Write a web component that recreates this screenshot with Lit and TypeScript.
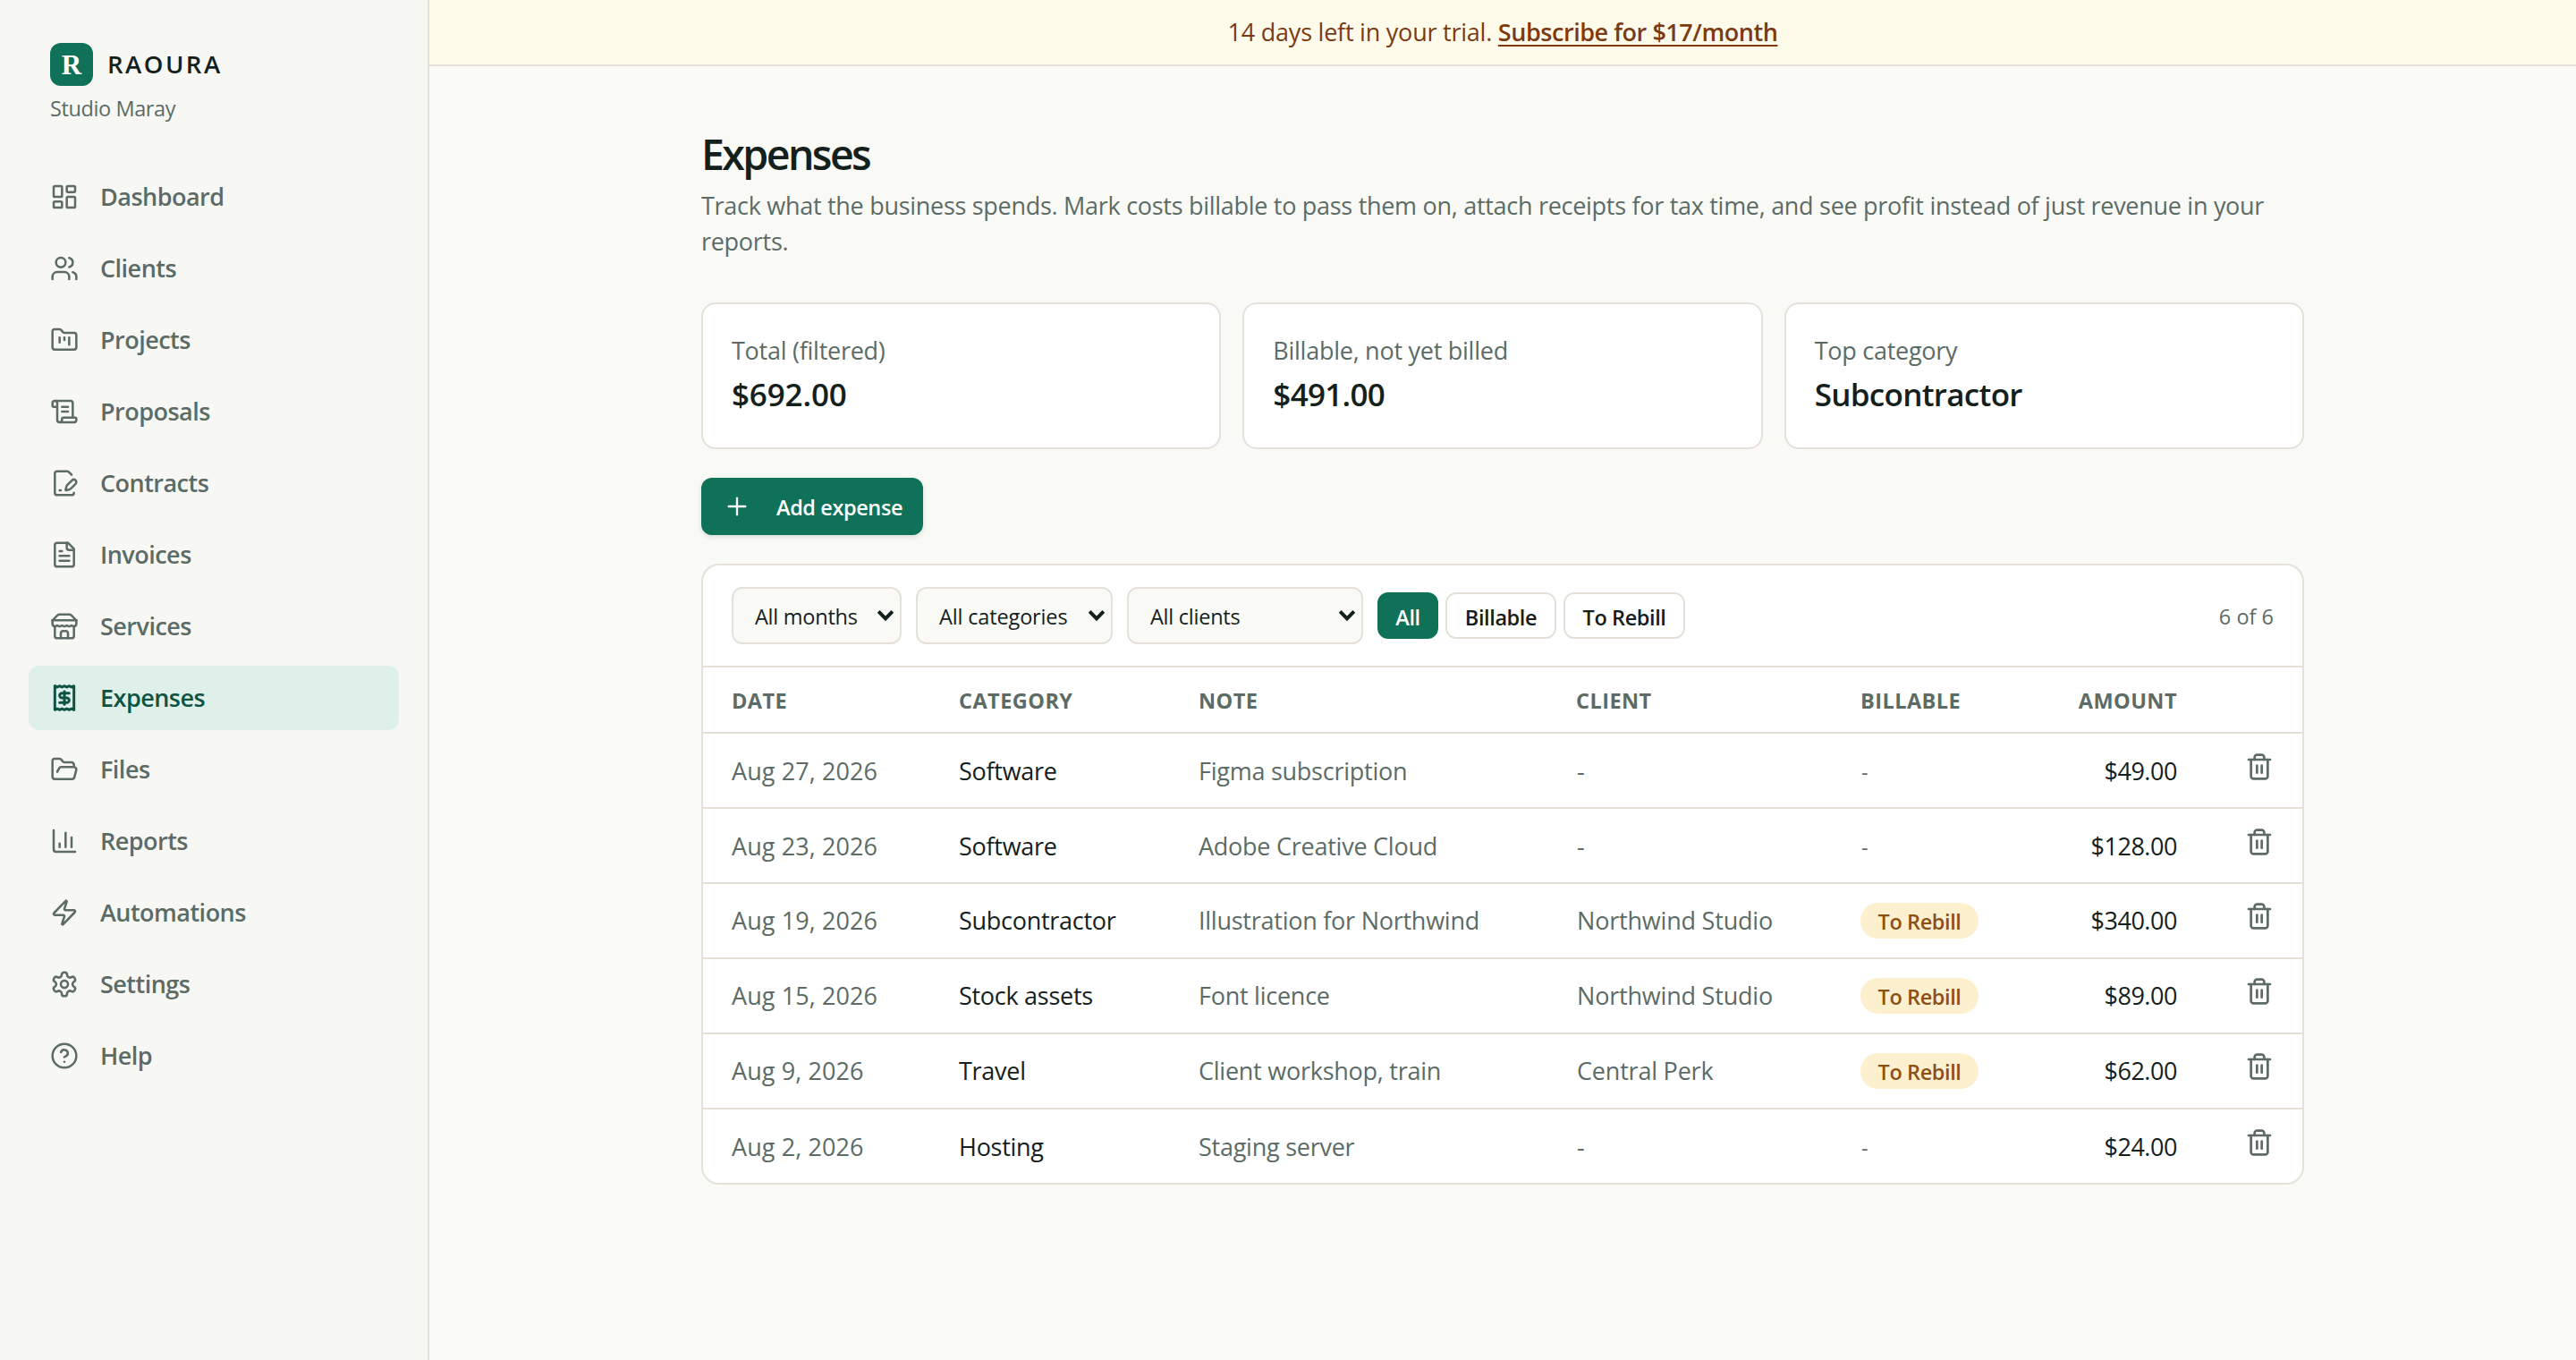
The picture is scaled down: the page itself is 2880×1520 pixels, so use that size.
import { LitElement, html, css, svg } from "lit";
import { customElement, property } from "lit/decorators.js";
import { classMap } from "lit/directives/class-map.js";

const ICONS: Record<string, unknown> = {
  dashboard: svg`<rect width="7" height="9" x="3" y="3" rx="1"/><rect width="7" height="5" x="14" y="3" rx="1"/><rect width="7" height="9" x="14" y="12" rx="1"/><rect width="7" height="5" x="3" y="16" rx="1"/>`,
  users: svg`<path d="M16 21v-2a4 4 0 0 0-4-4H6a4 4 0 0 0-4 4v2"/><circle cx="9" cy="7" r="4"/><path d="M22 21v-2a4 4 0 0 0-3-3.87"/><path d="M16 3.13a4 4 0 0 1 0 7.75"/>`,
  kanban: svg`<path d="M4 20h16a2 2 0 0 0 2-2V8a2 2 0 0 0-2-2h-7.93a2 2 0 0 1-1.66-.9l-.82-1.2A2 2 0 0 0 7.93 3H4a2 2 0 0 0-2 2v13c0 1.1.9 2 2 2Z"/><path d="M8 10v4"/><path d="M12 10v2"/><path d="M16 10v6"/>`,
  scroll: svg`<path d="M15 12h-5"/><path d="M15 8h-5"/><path d="M19 17V5a2 2 0 0 0-2-2H4"/><path d="M8 21h12a2 2 0 0 0 2-2v-1a1 1 0 0 0-1-1H11a1 1 0 0 0-1 1v1a2 2 0 1 1-4 0V5a2 2 0 1 0-4 0v2a1 1 0 0 0 1 1h3"/>`,
  filePen: svg`<path d="m18 5-2.414-2.414A2 2 0 0 0 14.172 2H6a2 2 0 0 0-2 2v16a2 2 0 0 0 2 2h12a2 2 0 0 0 2-2"/><path d="M21.378 12.626a1 1 0 0 0-3.004-3.004l-4.01 4.012a2 2 0 0 0-.506.854l-.837 2.87a.5.5 0 0 0 .62.62l2.87-.837a2 2 0 0 0 .854-.506z"/><path d="M8 18h1"/>`,
  fileText: svg`<path d="M15 2H6a2 2 0 0 0-2 2v16a2 2 0 0 0 2 2h12a2 2 0 0 0 2-2V7Z"/><path d="M14 2v4a2 2 0 0 0 2 2h4"/><path d="M10 9H8"/><path d="M16 13H8"/><path d="M16 17H8"/>`,
  store: svg`<path d="m2 7 4.41-4.41A2 2 0 0 1 7.83 2h8.34a2 2 0 0 1 1.42.59L22 7"/><path d="M4 12v8a2 2 0 0 0 2 2h12a2 2 0 0 0 2-2v-8"/><path d="M15 22v-4a2 2 0 0 0-2-2h-2a2 2 0 0 0-2 2v4"/><path d="M2 7h20"/><path d="M22 7v3a2 2 0 0 1-2 2a2.7 2.7 0 0 1-1.59-.63.7.7 0 0 0-.82 0A2.7 2.7 0 0 1 16 12a2.7 2.7 0 0 1-1.59-.63.7.7 0 0 0-.82 0A2.7 2.7 0 0 1 12 12a2.7 2.7 0 0 1-1.59-.63.7.7 0 0 0-.82 0A2.7 2.7 0 0 1 8 12a2.7 2.7 0 0 1-1.59-.63.7.7 0 0 0-.82 0A2.7 2.7 0 0 1 4 12a2 2 0 0 1-2-2V7"/>`,
  receipt: svg`<path d="M4 2v20l2-1 2 1 2-1 2 1 2-1 2 1 2-1 2 1V2l-2 1-2-1-2 1-2-1-2 1-2-1-2 1Z"/><path d="M16 8h-6a2 2 0 1 0 0 4h4a2 2 0 1 1 0 4H8"/><path d="M12 17.5v-11"/>`,
  folderOpen: svg`<path d="m6 14 1.5-2.9A2 2 0 0 1 9.24 10H20a2 2 0 0 1 1.94 2.5l-1.54 6a2 2 0 0 1-1.95 1.5H4a2 2 0 0 1-2-2V5a2 2 0 0 1 2-2h3.9a2 2 0 0 1 1.69.9l.81 1.2a2 2 0 0 0 1.67.9H18a2 2 0 0 1 2 2v2"/>`,
  chart: svg`<path d="M3 3v16a2 2 0 0 0 2 2h16"/><path d="M18 17V9"/><path d="M13 17V5"/><path d="M8 17v-3"/>`,
  zap: svg`<path d="M4 14a1 1 0 0 1-.78-1.63l9.9-10.2a.5.5 0 0 1 .86.46l-1.92 6.02A1 1 0 0 0 13 10h7a1 1 0 0 1 .78 1.63l-9.9 10.2a.5.5 0 0 1-.86-.46l1.92-6.02A1 1 0 0 0 11 14z"/>`,
  settings: svg`<path d="M12.22 2h-.44a2 2 0 0 0-2 2v.18a2 2 0 0 1-1 1.73l-.43.25a2 2 0 0 1-2 0l-.15-.08a2 2 0 0 0-2.73.73l-.22.38a2 2 0 0 0 .73 2.73l.15.1a2 2 0 0 1 1 1.72v.51a2 2 0 0 1-1 1.74l-.15.09a2 2 0 0 0-.73 2.73l.22.38a2 2 0 0 0 2.73.73l.15-.08a2 2 0 0 1 2 0l.43.25a2 2 0 0 1 1 1.73V20a2 2 0 0 0 2 2h.44a2 2 0 0 0 2-2v-.18a2 2 0 0 1 1-1.73l.43-.25a2 2 0 0 1 2 0l.15.08a2 2 0 0 0 2.73-.73l.22-.39a2 2 0 0 0-.73-2.73l-.15-.08a2 2 0 0 1-1-1.74v-.5a2 2 0 0 1 1-1.74l.15-.09a2 2 0 0 0 .73-2.73l-.22-.38a2 2 0 0 0-2.73-.73l-.15.08a2 2 0 0 1-2 0l-.43-.25a2 2 0 0 1-1-1.73V4a2 2 0 0 0-2-2z"/><circle cx="12" cy="12" r="3"/>`,
  help: svg`<circle cx="12" cy="12" r="10"/><path d="M9.09 9a3 3 0 0 1 5.83 1c0 2-3 3-3 3"/><path d="M12 17h.01"/>`,
  plus: svg`<path d="M5 12h14"/><path d="M12 5v14"/>`,
  trash: svg`<path d="M3 6h18"/><path d="M19 6v14c0 1-1 2-2 2H7c-1 0-2-1-2-2V6"/><path d="M8 6V4c0-1 1-2 2-2h4c1 0 2 1 2 2v2"/><path d="M10 11v6"/><path d="M14 11v6"/>`,
};

@customElement("ui-icon")
export class UiIcon extends LitElement {
  @property() name = "";
  @property({ type: Number }) weight = 1.75;
  static styles = css`
    :host { display: block; width: 32px; height: 32px; flex: none; }
    .glyph { display: block; width: 100%; height: 100%; }
  `;
  render() {
    return html`<svg class="glyph" viewBox="0 0 24 24" fill="none" stroke="currentColor"
      stroke-width=${this.weight} stroke-linecap="round" stroke-linejoin="round">${ICONS[this.name]}</svg>`;
  }
}

const NAV: [string, string][] = [
  ["Dashboard", "dashboard"], ["Clients", "users"], ["Projects", "kanban"], ["Proposals", "scroll"],
  ["Contracts", "filePen"], ["Invoices", "fileText"], ["Services", "store"], ["Expenses", "receipt"],
  ["Files", "folderOpen"], ["Reports", "chart"], ["Automations", "zap"], ["Settings", "settings"], ["Help", "help"],
];

@customElement("app-sidebar")
export class AppSidebar extends LitElement {
  static styles = css`
    :host { display: flex; flex-direction: column; box-sizing: border-box; width: 480px; flex: none;
      padding: 48px 32px 0; border-right: 2px solid #e5e1d8; background: #f7f8f4; }
    .brand { display: flex; align-items: center; gap: 16px; padding-left: 24px; height: 48px; }
    .mark { width: 48px; height: 48px; border-radius: 12px; background: #0f7158; color: #fff;
      font: 700 31px/50px "Liberation Serif", serif; text-align: center; }
    .name { font-size: 27.5px; font-weight: 600; letter-spacing: 2.5px; line-height: 48px; color: #14201c; }
    .studio { padding-left: 24px; margin-top: 5px; font-size: 23.5px; line-height: 40px; letter-spacing: -0.4px; color: #5c6b66; }
    .nav { display: flex; flex-direction: column; gap: 8px; margin-top: 43px; }
    .item { display: flex; align-items: center; gap: 24px; height: 72px; padding: 0 24px; border-radius: 12px;
      font-size: 27px; font-weight: 600; line-height: 72px; letter-spacing: -0.52px; color: #5c6b66; }
    .active { background: #dff0ea; color: #0f5443; }
  `;
  render() {
    return html`
      <div class="brand"><div class="mark">R</div><div class="name">RAOURA</div></div>
      <div class="studio">Studio Maray</div>
      <nav class="nav">${NAV.map(([label, icon]) => {
        const active = label === "Expenses";
        return html`<div class=${classMap({ item: true, active })}>
          <ui-icon name=${icon} .weight=${active ? 2.25 : 1.9}></ui-icon><span>${label}</span></div>`;
      })}</nav>`;
  }
}

interface Expense { date: string; category: string; note: string; client: string; rebill: boolean; amount: string; }

const EXPENSES: Expense[] = [
  { date: "Aug 27, 2026", category: "Software", note: "Figma subscription", client: "-", rebill: false, amount: "$49.00" },
  { date: "Aug 23, 2026", category: "Software", note: "Adobe Creative Cloud", client: "-", rebill: false, amount: "$128.00" },
  { date: "Aug 19, 2026", category: "Subcontractor", note: "Illustration for Northwind", client: "Northwind Studio", rebill: true, amount: "$340.00" },
  { date: "Aug 15, 2026", category: "Stock assets", note: "Font licence", client: "Northwind Studio", rebill: true, amount: "$89.00" },
  { date: "Aug 9, 2026", category: "Travel", note: "Client workshop, train", client: "Central Perk", rebill: true, amount: "$62.00" },
  { date: "Aug 2, 2026", category: "Hosting", note: "Staging server", client: "-", rebill: false, amount: "$24.00" },
];

@customElement("expense-table")
export class ExpenseTable extends LitElement {
  static styles = css`
    :host { display: block; box-sizing: border-box; height: 694px; border: 2px solid #e5e1d8; border-radius: 20px; background: #fff; overflow: hidden; }
    .filters { display: flex; align-items: center; height: 112px; padding: 0 32px; border-bottom: 2px solid #e5e1d8;
      font-size: 23.5px; color: #14201c; }
    .select { display: flex; align-items: center; justify-content: space-between; box-sizing: border-box; height: 64px;
      margin-right: 16px; padding: 2px 6px 0 24px; border: 2px solid #e5e1d8; border-radius: 12px; background: #f9faf6;
      letter-spacing: -0.25px; line-height: 40px; }
    .months { width: 190px; }
    .categories { width: 220px; letter-spacing: -0.15px; }
    .clients { width: 264px; }
    .chevron { width: 20px; height: 14px; margin-top: -2px; }
    .chips { display: flex; gap: 8px; }
    .chip { box-sizing: border-box; height: 52px; padding-top: 2px; border: 2px solid #e5e1d8; border-radius: 12px;
      font-weight: 600; line-height: 48px; text-align: center; letter-spacing: -0.4px; }
    .chip-all { width: 68px; border-color: #0f7158; background: #0f7158; color: #fff; }
    .chip-billable { width: 124px; }
    .chip-rebill { width: 136px; }
    .count { margin-left: auto; padding-top: 2px; line-height: 40px; color: #5c6b66; }
    .row { display: grid; grid-template-columns: 254px 268px 422px 318px 174px 180px 1fr; align-items: center; box-sizing: border-box;
      height: 84px; padding: 0 32px; border-bottom: 2px solid #e5e1d8; font-size: 27px; line-height: 82px; color: #5c6b66; }
    .row:last-child { border-bottom: none; height: 82px; }
    .head { height: 74px; padding-top: 2px; font-size: 23.5px; font-weight: 700; line-height: 70px; letter-spacing: 0.45px; }
    .date { letter-spacing: 0.1px; }
    .category { color: #14201c; letter-spacing: -0.28px; }
    .note { letter-spacing: -0.25px; }
    .client { padding-left: 1px; letter-spacing: -0.2px; }
    .none { font-size: 23.5px; padding: 2px 0 0 1px; }
    .badge { display: block; box-sizing: border-box; width: 132px; height: 40px; padding-top: 1px; border-radius: 20px; background: #fdf0cf; color: #8a5115;
      font-size: 23.5px; font-weight: 600; line-height: 40px; letter-spacing: -0.4px; text-align: center; }
    .amount { text-align: right; }
    .money { color: #14201c; letter-spacing: -0.45px; }
    .trash { justify-self: end; margin-bottom: 10px; }
  `;
  private select(label: string, kind: string) {
    return html`<div class="select ${kind}"><span>${label}</span>
      <svg class="chevron" viewBox="0 0 20 14" fill="none" stroke="#14201c" stroke-width="4"><path d="M2.2 2.4 10 10.4 17.8 2.4"/></svg></div>`;
  }
  render() {
    return html`
      <div class="filters">
        ${this.select("All months", "months")}${this.select("All categories", "categories")}${this.select("All clients", "clients")}
        <div class="chips">
          <div class="chip chip-all">All</div><div class="chip chip-billable">Billable</div><div class="chip chip-rebill">To Rebill</div>
        </div>
        <span class="count">6 of 6</span>
      </div>
      <div class="row head"><span>DATE</span><span>CATEGORY</span><span>NOTE</span><span>CLIENT</span><span>BILLABLE</span><span class="amount">AMOUNT</span>
      </div>
      ${EXPENSES.map(e => html`<div class="row">
        <span class="date">${e.date}</span><span class="category">${e.category}</span><span class="note">${e.note}</span>
        <span class="client">${e.client}</span>
        ${e.rebill ? html`<span class="badge">To Rebill</span>` : html`<span class="none">-</span>`}
        <span class="amount money">${e.amount}</span>
        <ui-icon class="trash" name="trash" .weight=${2.05}></ui-icon></div>`)}`;
  }
}

@customElement("app-root")
export class AppRoot extends LitElement {
  static styles = css`
    :host { display: flex; min-height: 1520px; background: #f9faf6; color: #14201c;
      font-family: "Open Sans", "Noto Sans", sans-serif; }
    .main { flex: 1; display: flex; flex-direction: column; }
    .banner { height: 72px; border-bottom: 2px solid #e5e1d8; background: #fffbeb; color: #7c3a12; text-align: center;
      font-size: 27px; line-height: 72px; letter-spacing: -0.23px; }
    .link { font-weight: 600; letter-spacing: -0.45px; text-decoration: underline; text-decoration-thickness: 2px; text-underline-offset: 4px; text-decoration-skip-ink: none; }
    .page { width: 1792px; margin: 68px auto 0; }
    .title { margin: 0; font-size: 46.5px; font-weight: 600; line-height: 60px; letter-spacing: -2.6px; }
    .lead { margin: 8px 0 0; font-size: 27px; line-height: 40px; letter-spacing: -0.29px; color: #5c6b66; }
    .stats { display: grid; grid-template-columns: repeat(3, 1fr); gap: 24px; margin-top: 48px; }
    .stat { box-sizing: border-box; height: 164px; padding: 32px 32px 0; border: 2px solid #e5e1d8; border-radius: 16px; background: #fff; }
    .label { font-size: 27px; line-height: 40px; letter-spacing: -0.26px; color: #5c6b66; }
    .value { margin-top: 5px; font-size: 35px; font-weight: 600; line-height: 48px; letter-spacing: -0.7px; }
    .total { letter-spacing: -0.15px; }
    .add { display: flex; align-items: center; box-sizing: border-box; width: 248px; height: 64px; margin: 32px 0; padding: 0 24px;
      gap: 28px; border-radius: 12px; background: #0f7158; color: #fff; font-size: 23.5px; font-weight: 600; letter-spacing: -0.4px;
      white-space: nowrap; box-shadow: 0 2px 5px rgba(20, 32, 28, 0.14); }
    .add-text { padding-top: 2px; line-height: 40px; }
  `;
  render() {
    const stats = [["Total (filtered)", "$692.00", "total"], ["Billable, not yet billed", "$491.00", "unbilled"], ["Top category", "Subcontractor", "top"]];
    return html`
      <app-sidebar></app-sidebar>
      <main class="main">
        <div class="banner">14 days left in your trial. <span class="link">Subscribe for $17/month</span></div>
        <div class="page">
          <h1 class="title">Expenses</h1>
          <p class="lead">Track what the business spends. Mark costs billable to pass them on, attach receipts for tax time, and see profit instead of just revenue in your reports.</p>
          <div class="stats">${stats.map(([l, v, kind]) => html`<div class="stat"><div class="label">${l}</div><div class="value ${kind}">${v}</div></div>`)}</div>
          <div class="add"><ui-icon name="plus"></ui-icon><span class="add-text">Add expense</span></div>
          <expense-table></expense-table>
        </div>
      </main>`;
  }
}
